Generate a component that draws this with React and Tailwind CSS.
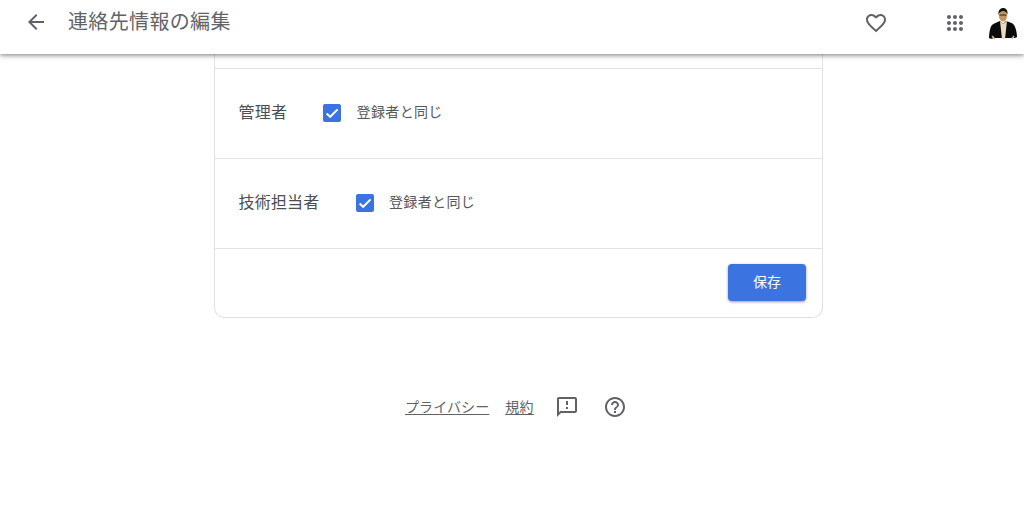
const FONT = "font-['Roboto','Noto_Sans_CJK_JP',sans-serif]";

const CheckBox = () => (
  <span className="flex h-[18px] w-[18px] items-center justify-center rounded-[2px] bg-[#3b73e0]">
    <svg width="14" height="14" viewBox="0 0 14 14" fill="none">
      <path d="M1.600 7.400l3.600 3.400L12.600 3.400" stroke="#fff" strokeWidth="2" />
    </svg>
  </span>
);

const ContactRow = ({ label, gap }) => (
  <div className="flex h-[90px] items-center border-b border-[#e3e3e3] pl-[24px] pb-[1px]">
    <span className={`text-[16px] leading-[20px] tracking-[0.2px] text-[#4a4d51] ${gap}`}>{label}</span>
    <CheckBox />
    <span className="ml-[15.500px] mb-[2px] text-[14px] leading-[20px] tracking-[0.35px] text-[#55585c]">登録者と同じ</span>
  </div>
);

const Avatar = () => (
  <svg width="30" height="34" viewBox="0 0 30 34">
    <path d="M1 32c0-4 1-11 3-13 2-2 6-3 8-4l3 3 3-3c3 1 7 2 8 4 2 3 3 9 3 12-3 2-5 0-6 1H6c-2 1-4 1-5 0z" fill="#0c0a0a" />
    <path d="M12 15l2 18h3l2-18-4 3z" fill="#e9dcc0" />
    <ellipse cx="15" cy="10" rx="4" ry="5.500" fill="#c8955f" />
    <path d="M10.500 9c-.5-5 2-7 4.500-7s5 1.500 4.500 6.500c-1-2.500-3-3.500-4.500-3.500s-3.500 1-4.500 4z" fill="#15110f" />
    <path d="M11.500 9h7" stroke="#2a2320" strokeWidth="1" />
    <path d="M4 30l3 3M26 30l-2 3" stroke="#d9b98c" strokeWidth="1.500" />
  </svg>
);

const App = () => {
  return (
    <div className={`h-[521px] w-[1024px] overflow-hidden bg-white ${FONT}`}>
      {/* Header */}
      <header className="relative z-10 flex h-[54px] items-center bg-white pb-[9px] shadow-[0_1px_5px_rgba(0,0,0,0.55)]">
        <svg className="ml-[24px] -mt-[1px]" width="24" height="24" viewBox="0 0 24 24" fill="#5f6368">
          <path d="M20 11H7.830l5.590-5.590L12 4l-8 8 8 8 1.410-1.410L7.830 13H20v-2z" />
        </svg>
        <h1 className="ml-[20px] -mt-[1px] text-[20px] font-normal leading-[28px] tracking-[0.35px] text-[#5f6368]">連絡先情報の編集</h1>
        <svg className="ml-auto" width="24" height="24" viewBox="0 0 24 24" fill="#5f6368">
          <path d="M16.500 3c-1.740 0-3.410.81-4.500 2.090C10.910 3.810 9.240 3 7.500 3 4.420 3 2 5.420 2 8.500c0 3.780 3.400 6.860 8.550 11.540L12 21.350l1.450-1.320C18.600 15.360 22 12.280 22 8.500 22 5.420 19.580 3 16.500 3zm-4.400 15.550l-.1.100-.1-.1C7.140 14.240 4 11.390 4 8.500 4 6.500 5.500 5 7.500 5c1.540 0 3.040.99 3.570 2.360h1.870C13.460 5.990 14.960 5 16.500 5c2 0 3.500 1.500 3.500 3.500 0 2.890-3.140 5.740-7.900 10.050z" />
        </svg>
        <svg className="ml-[55px]" width="24" height="24" viewBox="0 0 24 24" fill="#5f6368">
          <path d="M6 8c1.100 0 2-.9 2-2s-.9-2-2-2-2 .9-2 2 .9 2 2 2zm6 12c1.100 0 2-.9 2-2s-.9-2-2-2-2 .9-2 2 .9 2 2 2zm-6 0c1.100 0 2-.9 2-2s-.9-2-2-2-2 .9-2 2 .9 2 2 2zm0-6c1.100 0 2-.9 2-2s-.9-2-2-2-2 .9-2 2 .9 2 2 2zm6 0c1.100 0 2-.9 2-2s-.9-2-2-2-2 .9-2 2 .9 2 2 2zm4-8c0 1.100.9 2 2 2s2-.9 2-2-.9-2-2-2-2 .9-2 2zm-4 2c1.100 0 2-.9 2-2s-.9-2-2-2-2 .9-2 2 .9 2 2 2zm6 6c1.100 0 2-.9 2-2s-.9-2-2-2-2 .9-2 2 .9 2 2 2zm0 6c1.100 0 2-.9 2-2s-.9-2-2-2-2 .9-2 2 .9 2 2 2z" />
        </svg>
        <div className="ml-[21px] mr-[6px]">
          <Avatar />
        </div>
      </header>

      {/* Card */}
      <main className="ml-[213.500px] w-[609.500px] rounded-b-[10px] border-x border-b border-[#dfe1e5]">
        <div className="h-[15px] border-b border-[#e3e3e3]" />
        <ContactRow label="管理者" gap="mr-[36px]" />
        <ContactRow label="技術担当者" gap="mr-[36px]" />
        <div className="flex h-[68px] items-start justify-end pr-[16px] pt-[15px]">
          <button className="h-[37px] w-[78px] rounded-[4px] bg-[#3b73e0] text-[14px] text-white shadow-[0_1px_3px_rgba(0,0,0,0.4)]">保存</button>
        </div>
      </main>

      {/* Footer */}
      <footer className="ml-[405px] mt-[77px] flex items-center text-[14px] text-[#5f6368]">
        <a className="underline underline-offset-2 tracking-[0.1px]">プライバシー</a>
        <a className="ml-[16px] underline underline-offset-2 tracking-[0.2px]">規約</a>
        <svg className="ml-[21px]" width="24" height="24" viewBox="0 0 24 24" fill="#5f6368">
          <path d="M20 2H4c-1.100 0-2 .9-2 2v18l4-4h14c1.100 0 2-.9 2-2V4c0-1.100-.9-2-2-2zm0 14H5.170L4 17.170V4h16v12zM11 12h2v2h-2zm0-6h2v4h-2z" />
        </svg>
        <svg className="ml-[24px]" width="24" height="24" viewBox="0 0 24 24" fill="#5f6368">
          <path d="M11 18h2v-2h-2v2zm1-16C6.480 2 2 6.480 2 12s4.480 10 10 10 10-4.480 10-10S17.520 2 12 2zm0 18c-4.410 0-8-3.590-8-8s3.590-8 8-8 8 3.590 8 8-3.590 8-8 8zm0-14c-2.210 0-4 1.790-4 4h2c0-1.100.9-2 2-2s2 .9 2 2c0 2-3 1.750-3 5h2c0-2.250 3-2.500 3-5 0-2.210-1.790-4-4-4z" />
        </svg>
      </footer>
    </div>
  );
};

export default App;
